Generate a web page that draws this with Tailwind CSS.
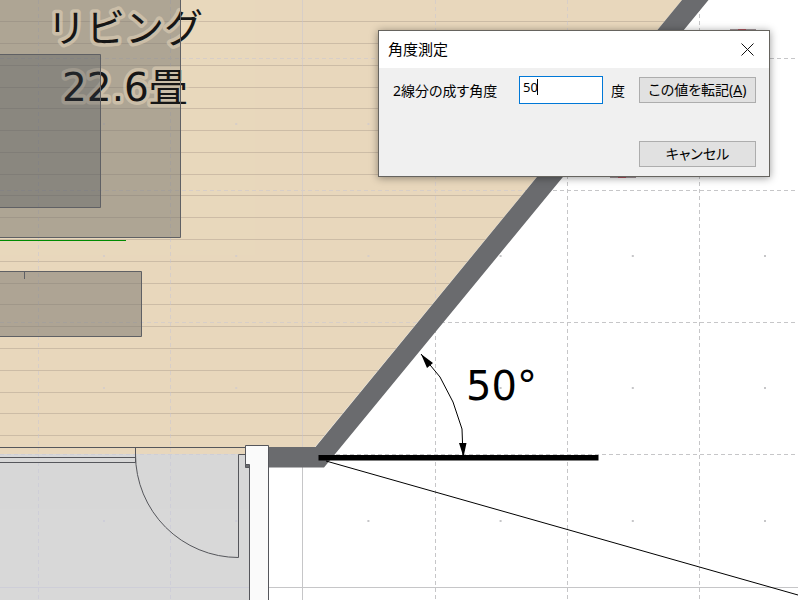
<!DOCTYPE html>
<html lang="ja">
<head>
    <meta charset="UTF-8">
    <meta name="viewport" content="width=device-width, initial-scale=1.0">
    <title>角度測定</title>
    <script src="https://cdn.jsdelivr.net/npm/@tailwindcss/browser@4"></script>
</head>
<body class="bg-white text-black font-['Noto_Sans','Noto_Sans_CJK_JP',sans-serif]">
    <main class="relative h-screen overflow-hidden">
        <!-- floor plan -->
        <svg class="block w-full h-full" viewBox="0 0 800 600" preserveAspectRatio="xMinYMin slice">
            <defs>
                <g id="grid" fill="none" stroke="currentColor">
                    <path stroke-dasharray="4 3" d="M38.5 0V600M170.5 0V600M435.5 0V600M567.5 0V600M699.5 0V600M0 58.5H798M0 190.5H798M0 322.5H798M0 454.5H798" />
                    <path d="M302.5 0V600M0 587.5H798" />
                    <path stroke-width="2" stroke-dasharray="2 130.2" d="M103 124H798M103 256H798M103 388H798M103 521H798" />
                </g>
                <clipPath id="rooms">
                    <path d="M0 0H682L315 447V454H249V600H0Z" />
                </clipPath>
            </defs>

            <use href="#grid" class="text-[#c6c6c8]" />

            <!-- living room floor -->
            <path fill="#e8d8bc" d="M0 0H682L315 447V454H0Z" />
            <g clip-path="url(#rooms)">
                <path stroke="#cdbca6" fill="none" d="M0 21.5H700M0 43.5H700M0 65.5H700M0 87.5H700M0 108.5H700M0 130.5H700M0 152.5H700M0 174.5H700M0 195.5H700M0 217.5H700M0 239.5H700M0 261.5H700M0 283.5H700M0 304.5H700M0 326.5H700M0 348.5H700M0 370.5H700M0 392.5H700M0 413.5H700M0 435.5H700" />
                <path fill="#d8d8d8" d="M0 454H249V600H0Z" />
                <use href="#grid" class="text-[#c4c4d8]" opacity=".45" />
            </g>

            <!-- furniture -->
            <g fill="#74726c" fill-opacity=".5" stroke="#5f6064">
                <path d="M-2 -2H180.5V237.5H-2Z" />
                <path d="M-2 271.5H141.5V336.5H-2ZM24.5 271V279" />
            </g>
            <path stroke="#008a00" d="M0 240.5H126" />

            <g class="font-['DejaVu_Sans','Noto_Sans_CJK_JP',sans-serif] text-[39px]" fill="#161616">
                <g stroke="#e8d8bc" stroke-width="7" stroke-linejoin="round" opacity=".5">
                    <text x="47" y="42">リビング</text>
                    <text x="62" y="101">22.6畳</text>
                </g>
                <text x="47" y="42">リビング</text>
                <text x="62" y="101">22.6畳</text>
            </g>
            <path stroke="#5f6064" d="M180.5 0V237" />
            <path fill="#394151" fill-opacity=".3" stroke="#5f6064" d="M-2 54.5H100.5V207.5H-2Z" />

            <!-- walls -->
            <path fill="#6a6b6e" d="M268 447H315.5L682 0H708.5L324 467.5H268Z" />
            <g fill="none" stroke="#55565b">
                <path d="M0 447.5H245M135.5 447.5V462.5M0 457.5H135.5M0 462.5H135.5" />
                <path d="M245.5 454.5H238.5V557.5A103 103 0 0 1 135.5 454.5" />
                <path fill="#6a6b6e" d="M245.5 463.5H249.5V467.5H245.5Z" />
                <path fill="#fafafa" d="M245.5 445.5H268.5V602H249.5V464.5H245.5Z" />
            </g>

            <!-- angle dimension -->
            <path stroke="#000" stroke-width="5.5" d="M318.5 457.7H598.5" />
            <path fill="none" stroke="#000" d="M326 461L798 595M421 354L440 377L453 402L462 429L463 456" />
            <path d="M421 354L433 363L427 368ZM463.5 457L459 443H466.5Z" />
            <text x="466" y="400" class="font-['DejaVu_Sans',sans-serif] text-[40px]">50°</text>

            <!-- markers reaching out from under the dialog -->
            <path fill="#4a3038" d="M730 29.5H756V32H730ZM610 175H636V177.5H610Z" />
            <path fill="#b01020" d="M738 29.5H746V32H738ZM618 175H626V177.5H618Z" />
        </svg>

        <!-- dialog -->
        <form role="dialog" aria-labelledby="dialogTitle" class="absolute left-[378px] top-[30px] w-[392px] border border-[#66645f] bg-[#f0f0f0] text-sm shadow-[0_1px_8px_rgba(0,0,0,0.4)]">
            <div class="flex h-[37px] items-center justify-between bg-white pl-[9px] pr-[14px]">
                <h1 id="dialogTitle" class="text-[15px]">角度測定</h1>
                <button type="button" aria-label="閉じる" class="p-px">
                    <svg class="block size-[13px]" viewBox="0 0 13 13" fill="none" stroke="#111"><path d="M.5.5L12.5 12.5M12.5.5L.5 12.5" /></svg>
                </button>
            </div>
            <div class="flex items-start pt-2 pr-[13px] pl-[14px] pb-[9px] [font-feature-settings:'palt']">
                <label for="angle" class="w-[126px] pt-[5px]">2線分の成す角度</label>
                <div class="relative">
                    <input id="angle" type="text" value="50" class="block h-7 w-[84px] border border-[#0078d7] bg-white pl-[3px] pb-[6px] text-[13px] outline-none">
                    <span class="absolute left-[18px] top-[3px] h-4 w-px bg-black"></span>
                </div>
                <span class="pl-2 pt-[5px]">度</span>
                <div class="ml-auto flex w-[117px] flex-col gap-[38px] pt-px">
                    <button type="button" class="h-[26px] border border-[#adadad] bg-[#e1e1e1] leading-6">この値を転記(<u>A</u>)</button>
                    <button type="button" class="h-[26px] border border-[#adadad] bg-[#e1e1e1] leading-6">キャンセル</button>
                </div>
            </div>
        </form>
    </main>
</body>
</html>
